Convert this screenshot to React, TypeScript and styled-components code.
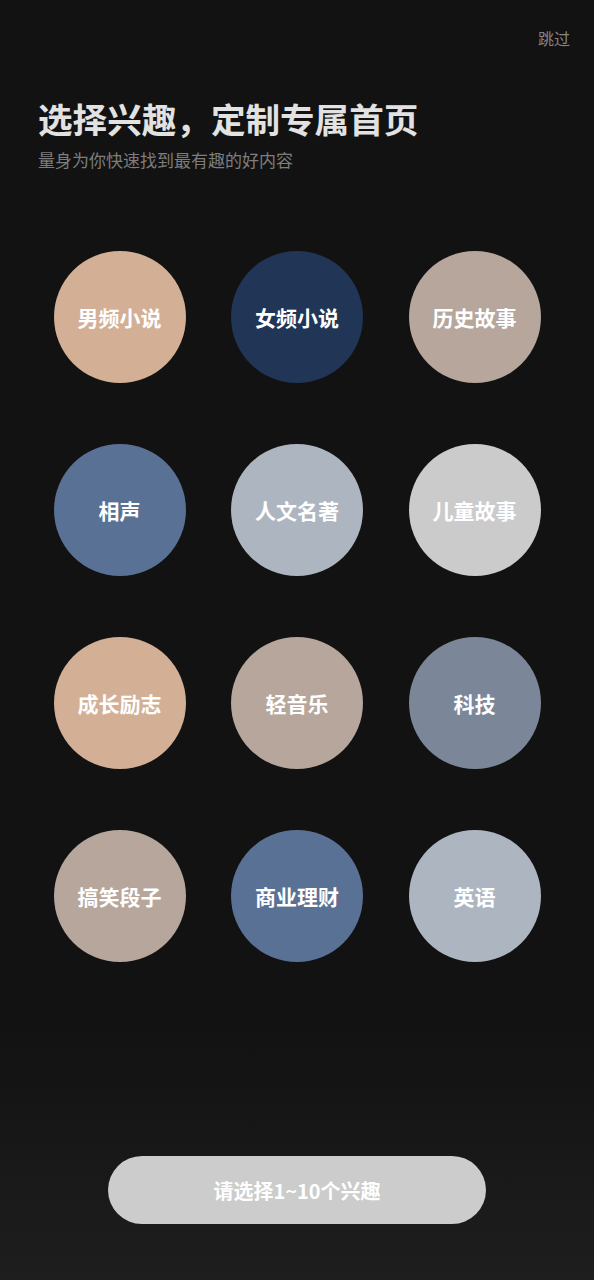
import React from "react";
import styled, { createGlobalStyle } from "styled-components";

const GlobalStyle = createGlobalStyle`
  html, body {
    margin: 0;
    padding: 0;
    background: #121212;
  }
  * { box-sizing: border-box; }
`;

const FONT = `"Noto Sans CJK SC", "Noto Sans", sans-serif`;

const Page = styled.div`
  width: 594px;
  height: 1280px;
  display: flex;
  flex-direction: column;
  background: linear-gradient(to bottom, #121212 0px, #121212 1030px, #1e1e1e 1280px);
  font-family: ${FONT};
  overflow: hidden;
`;

const TopBar = styled.div`
  display: flex;
  justify-content: flex-end;
  padding: 30px 24px 0 0;
`;

const Skip = styled.span`
  font-size: 16px;
  line-height: 16px;
  color: #858585;
`;

const Header = styled.div`
  padding-left: 38px;
  margin-top: 55px;
`;

const Title = styled.h1`
  margin: 0;
  font-size: 34.6px;
  line-height: 35px;
  font-weight: 700;
  color: #e2e2e2;
`;

const Subtitle = styled.p`
  margin: 15px 0 0;
  font-size: 17px;
  line-height: 17px;
  color: #7d7d7d;
`;

const Grid = styled.div`
  margin-top: 83px;
  display: grid;
  grid-template-columns: repeat(3, 132px);
  column-gap: 45.5px;
  row-gap: 61px;
  justify-content: center;
`;

const Bubble = styled.button<{ $bg: string }>`
  width: 132px;
  height: 132px;
  border-radius: 50%;
  border: none;
  padding: 0;
  background: ${(p) => p.$bg};
  display: flex;
  align-items: center;
  justify-content: center;
  font-family: ${FONT};
  font-size: 21px;
  line-height: 21px;
  font-weight: 700;
  color: #ffffff;
  cursor: pointer;
`;

const Footer = styled.div`
  margin-top: auto;
  display: flex;
  justify-content: center;
  padding-bottom: 56px;
`;

const ConfirmButton = styled.button`
  width: 378px;
  height: 68px;
  border-radius: 34px;
  border: none;
  background: #cccccc;
  color: #ffffff;
  font-family: ${FONT};
  font-size: 20px;
  font-weight: 700;
  display: flex;
  align-items: center;
  justify-content: center;
`;

const TAN = "#d3b095";
const NAVY = "#213556";
const TAUPE = "#b6a69c";
const BLUE = "#5a7196";
const SILVER = "#adb6c0";
const GREY = "#cbcbcb";
const SLATE = "#7b8799";

const interests: { label: string; color: string }[] = [
  { label: "男频小说", color: TAN },
  { label: "女频小说", color: NAVY },
  { label: "历史故事", color: TAUPE },
  { label: "相声", color: BLUE },
  { label: "人文名著", color: SILVER },
  { label: "儿童故事", color: GREY },
  { label: "成长励志", color: TAN },
  { label: "轻音乐", color: TAUPE },
  { label: "科技", color: SLATE },
  { label: "搞笑段子", color: TAUPE },
  { label: "商业理财", color: BLUE },
  { label: "英语", color: SILVER },
];

export default function App() {
  return (
    <>
      <GlobalStyle />
      <Page>
        <TopBar>
          <Skip>跳过</Skip>
        </TopBar>
        <Header>
          <Title>选择兴趣，定制专属首页</Title>
          <Subtitle>量身为你快速找到最有趣的好内容</Subtitle>
        </Header>
        <Grid>
          {interests.map((it) => (
            <Bubble key={it.label} $bg={it.color}>
              {it.label}
            </Bubble>
          ))}
        </Grid>
        <Footer>
          <ConfirmButton>请选择1~10个兴趣</ConfirmButton>
        </Footer>
      </Page>
    </>
  );
}
